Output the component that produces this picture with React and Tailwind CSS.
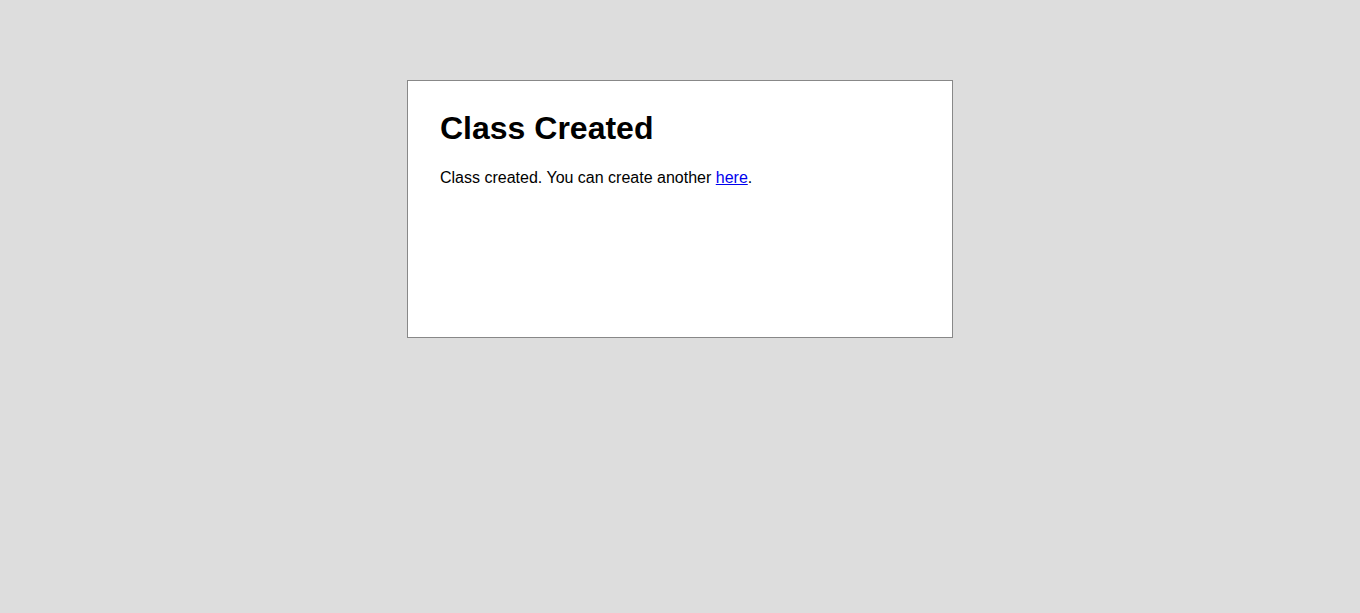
import React from 'react';

const App = () => {
  return (
    <div className="min-h-screen bg-[#dddddd] pt-[80px]" style={{ fontFamily: '"Liberation Sans", Arial, sans-serif' }}>
      <div className="mx-auto w-[546px] h-[258px] border border-[#888888] bg-white px-[32px] pt-[29px]">
        <h1 className="text-[32px] font-bold leading-[37px] text-black">Class Created</h1>
        <p className="mt-[22px] text-[16px] leading-[18px] text-black">
          Class created. You can create another{' '}
          <a href="#" className="text-[#0000ee] underline">here</a>.
        </p>
      </div>
    </div>
  );
};

export default App;
